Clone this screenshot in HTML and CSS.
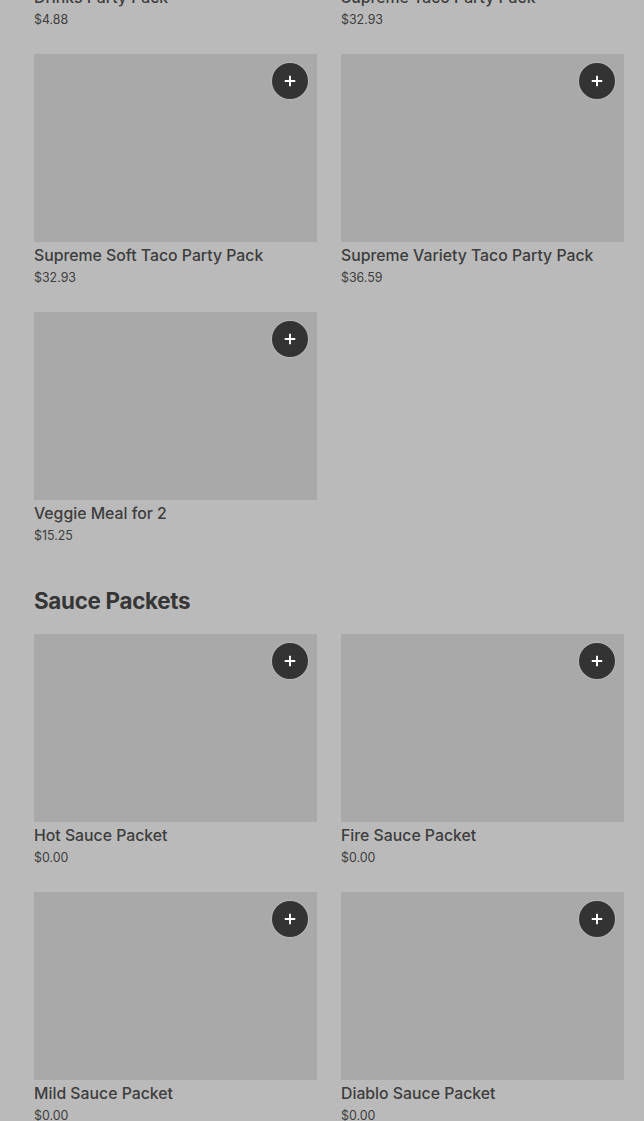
FILE: index.html
```html
<!DOCTYPE html>
<html lang="en">
<head>
<meta charset="utf-8">
<title>Menu</title>
<link rel="stylesheet" href="styles.css">
</head>
<body>
<main class="menu">
  <section class="section">
    <div class="grid">
      <article class="card">
        <div class="thumb"><button class="add" aria-label="Add"><svg viewBox="0 0 16 16" width="14" height="14"><path d="M8 2v12M2 8h12" stroke="#fff" stroke-width="2.2" fill="none"/></svg></button></div>
        <h3 class="name">Drinks Party Pack</h3>
        <p class="price">$4.88</p>
      </article>
      <article class="card">
        <div class="thumb"><button class="add" aria-label="Add"><svg viewBox="0 0 16 16" width="14" height="14"><path d="M8 2v12M2 8h12" stroke="#fff" stroke-width="2.2" fill="none"/></svg></button></div>
        <h3 class="name">Supreme Taco Party Pack</h3>
        <p class="price">$32.93</p>
      </article>
      <article class="card">
        <div class="thumb"><button class="add" aria-label="Add"><svg viewBox="0 0 16 16" width="14" height="14"><path d="M8 2v12M2 8h12" stroke="#fff" stroke-width="2.2" fill="none"/></svg></button></div>
        <h3 class="name">Supreme Soft Taco Party Pack</h3>
        <p class="price">$32.93</p>
      </article>
      <article class="card">
        <div class="thumb"><button class="add" aria-label="Add"><svg viewBox="0 0 16 16" width="14" height="14"><path d="M8 2v12M2 8h12" stroke="#fff" stroke-width="2.2" fill="none"/></svg></button></div>
        <h3 class="name">Supreme Variety Taco Party Pack</h3>
        <p class="price">$36.59</p>
      </article>
      <article class="card">
        <div class="thumb"><button class="add" aria-label="Add"><svg viewBox="0 0 16 16" width="14" height="14"><path d="M8 2v12M2 8h12" stroke="#fff" stroke-width="2.2" fill="none"/></svg></button></div>
        <h3 class="name">Veggie Meal for 2</h3>
        <p class="price">$15.25</p>
      </article>
    </div>
  </section>
  <section class="section">
    <h2 class="heading">Sauce Packets</h2>
    <div class="grid">
      <article class="card">
        <div class="thumb"><button class="add" aria-label="Add"><svg viewBox="0 0 16 16" width="14" height="14"><path d="M8 2v12M2 8h12" stroke="#fff" stroke-width="2.2" fill="none"/></svg></button></div>
        <h3 class="name">Hot Sauce Packet</h3>
        <p class="price">$0.00</p>
      </article>
      <article class="card">
        <div class="thumb"><button class="add" aria-label="Add"><svg viewBox="0 0 16 16" width="14" height="14"><path d="M8 2v12M2 8h12" stroke="#fff" stroke-width="2.2" fill="none"/></svg></button></div>
        <h3 class="name">Fire Sauce Packet</h3>
        <p class="price">$0.00</p>
      </article>
      <article class="card">
        <div class="thumb"><button class="add" aria-label="Add"><svg viewBox="0 0 16 16" width="14" height="14"><path d="M8 2v12M2 8h12" stroke="#fff" stroke-width="2.2" fill="none"/></svg></button></div>
        <h3 class="name">Mild Sauce Packet</h3>
        <p class="price">$0.00</p>
      </article>
      <article class="card">
        <div class="thumb"><button class="add" aria-label="Add"><svg viewBox="0 0 16 16" width="14" height="14"><path d="M8 2v12M2 8h12" stroke="#fff" stroke-width="2.2" fill="none"/></svg></button></div>
        <h3 class="name">Diablo Sauce Packet</h3>
        <p class="price">$0.00</p>
      </article>
    </div>
  </section>
</main>
</body>
</html>
```
FILE: styles.css
```css
html, body {
  margin: 0;
  padding: 0;
  background: #bababa;
  overflow: hidden;
}
body {
  font-family: Inter, "Liberation Sans", sans-serif;
  color: #3a3a3a;
}
.menu {
  margin-top: -204px;
  padding: 0 20px 0 34px;
  display: flex;
  flex-direction: column;
  gap: 39px;
}
.grid {
  display: grid;
  grid-template-columns: 283px 283px;
  column-gap: 24px;
  row-gap: 24px;
}
.card {
  display: flex;
  flex-direction: column;
}
.thumb {
  position: relative;
  height: 188px;
  background: #a9a9a9;
}
.add {
  position: absolute;
  top: 9px;
  right: 9px;
  width: 36px;
  height: 36px;
  border-radius: 50%;
  border: none;
  padding: 0;
  background: #333333;
  box-shadow: 0 0 0 1px rgba(255,255,255,0.15);
  display: flex;
  align-items: center;
  justify-content: center;
}
.name {
  margin: 3px 0 0;
  font-size: 15.8px;
  line-height: 22px;
  font-weight: 500;
  color: #3d3d3d;
}
.price {
  margin: 1px 0 0;
  font-size: 12.4px;
  line-height: 20px;
  font-weight: 400;
  color: #3d3d3d;
}
.heading {
  margin: 0 0 17px;
  font-size: 22.4px;
  line-height: 32px;
  font-weight: 700;
  letter-spacing: -0.3px;
  color: #363636;
}
```
